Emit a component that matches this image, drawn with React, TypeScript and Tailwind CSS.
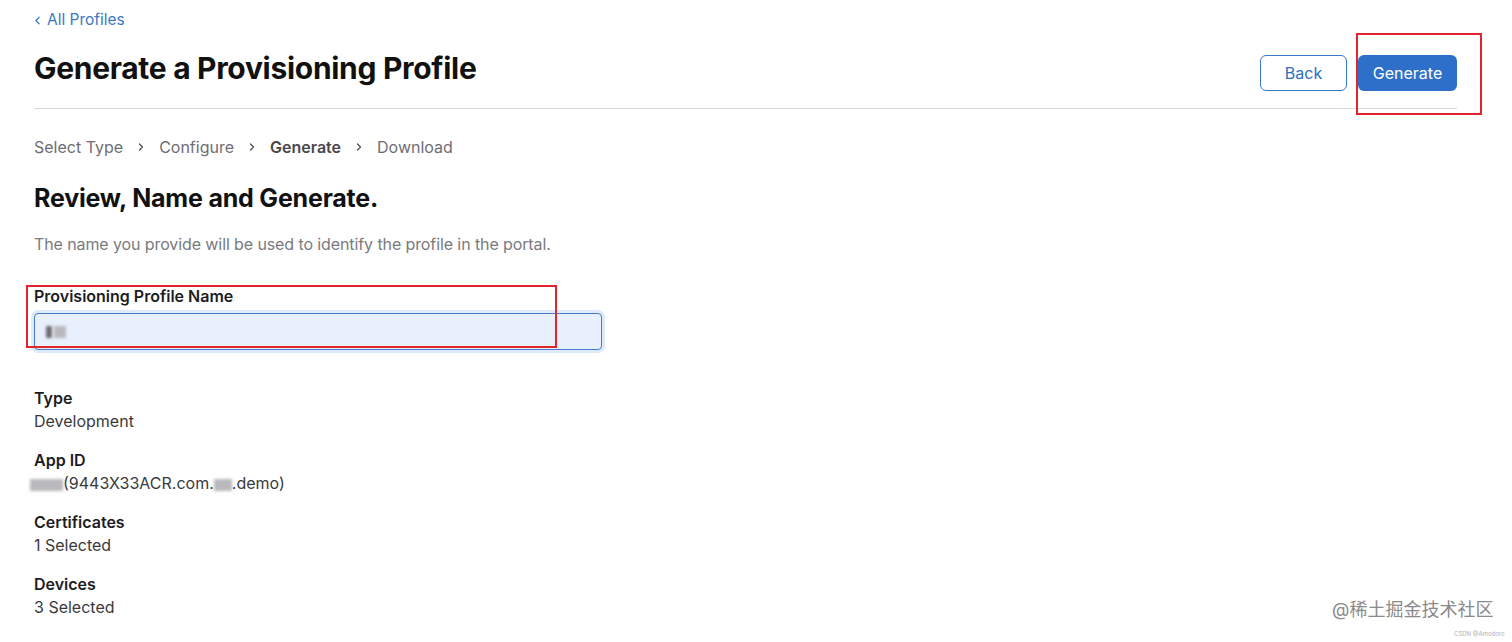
import { ChevronLeft, ChevronRight } from 'lucide-react';

const STEPS = ['Select Type', 'Configure', 'Generate', 'Download'];

function Blur({ w, tone = 'bg-[#b9b9bd]' }: { w: number; tone?: string }) {
  return <span className={`inline-block h-[12px] align-middle blur-[1.5px] ${tone}`} style={{ width: w }} />;
}

function Detail({ label, children, first }: { label: string; children: React.ReactNode; first?: boolean }) {
  return (
    <div className={first ? 'mt-[38px]' : 'mt-[19px]'}>
      <div className="text-[16px] leading-[20px] font-semibold text-[#1d1d1f]">{label}</div>
      <div className="mt-[3px] text-[16px] leading-[20px] text-[#3a3a3c]">{children}</div>
    </div>
  );
}

export default function App() {
  return (
    <div
      className="relative w-[1512px] h-[642px] overflow-hidden bg-white pl-[34px] pr-[55px]"
      style={{ fontFamily: 'Inter, "Noto Sans CJK SC", sans-serif' }}
    >
      <header className="flex items-start justify-between h-[109px] border-b border-[#d6d6d9]">
        <div className="pt-[10px]">
          <a className="flex items-center gap-[3px] h-[20px] text-[15.5px] text-[#3a79c4]">
            <ChevronLeft className="w-[13px] h-[13px] -ml-[3px]" strokeWidth={2.2} />
            All Profiles
          </a>
          <h1 className="mt-[20px] h-[36px] leading-[36px] text-[30px] font-bold tracking-[-0.3px] text-[#111]">
            Generate a Provisioning Profile
          </h1>
        </div>
        <div className="flex gap-[11px] pt-[55px]">
          <button className="w-[87px] h-[36px] rounded-[6px] border border-[#3a79c4] text-[16px] text-[#2f6dc0]">Back</button>
          <button className="w-[99px] h-[36px] rounded-[6px] bg-[#2e6fc9] text-[16px] text-white">Generate</button>
        </div>
      </header>

      <nav className="mt-[28px] flex items-center h-[20px] text-[16px] text-[#6e6e73]">
        {STEPS.map((s, i) => (
          <div key={s} className="flex items-center">
            {i > 0 && <ChevronRight className="mx-[12px] w-[12px] h-[12px] text-[#48484a]" strokeWidth={2.4} />}
            <span className={s === 'Generate' ? 'font-semibold text-[#48484a]' : ''}>{s}</span>
          </div>
        ))}
      </nav>

      <h2 className="mt-[26px] h-[30px] leading-[30px] text-[25px] font-bold tracking-[-0.2px] text-[#111]">
        Review, Name and Generate.
      </h2>
      <p className="mt-[21px] h-[20px] leading-[20px] text-[16px] tracking-[-0.1px] text-[#7a7a7e]">
        The name you provide will be used to identify the profile in the portal.
      </p>

      <label className="block mt-[32px] h-[20px] leading-[20px] text-[16px] font-semibold text-[#1d1d1f]">
        Provisioning Profile Name
      </label>
      <div className="mt-[7px] w-[568px] h-[37px] rounded-[4px] border border-[#4a7cce] bg-[#e9f0fd] shadow-[0_0_0_3px_rgba(160,195,240,0.35)] flex items-center pl-[11px] gap-[2px]">
        <Blur w={6} tone="bg-[#6b6b70]" />
        <Blur w={12} />
      </div>

      <Detail label="Type" first>Development</Detail>
      <Detail label="App ID">
        <span className="-ml-[4px]"><Blur w={33} /></span>(9443X33ACR.com.<Blur w={18} />.demo)
      </Detail>
      <Detail label="Certificates">1 Selected</Detail>
      <Detail label="Devices">3 Selected</Detail>

      {/* annotation boxes */}
      <div className="absolute left-[1356px] top-[33px] w-[126px] h-[82px] border-2 border-[#e0262c]" />
      <div className="absolute left-[26px] top-[285px] w-[531px] h-[63px] border-2 border-[#e0262c]" />

      {/* watermarks */}
      <div className="absolute left-[1332px] top-[598px] text-[18px] leading-[24px] text-[#8a8a8a] whitespace-nowrap">@稀土掘金技术社区</div>
      <div className="absolute left-[1454px] top-[630px] text-[6px] leading-[8px] text-[#b0b0b0] whitespace-nowrap">CSDN @Amodoro</div>
    </div>
  );
}
